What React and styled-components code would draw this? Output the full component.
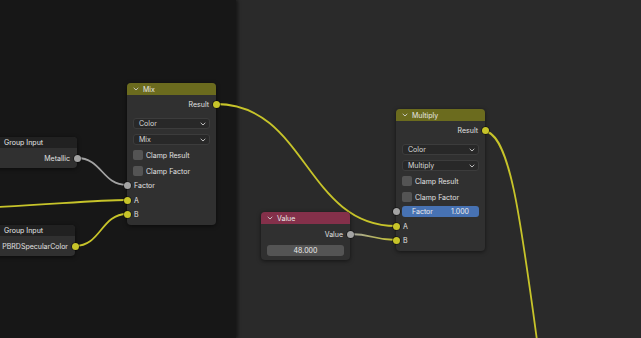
import React from 'react';
import styled, { createGlobalStyle } from 'styled-components';

const GlobalStyle = createGlobalStyle`
  html, body { margin: 0; padding: 0; background: #2a2a2a; }
  * { box-sizing: border-box; }
`;

const YELLOW = '#c7c42a';
const GREY = '#a3a3a3';

const Editor = styled.div`
  position: relative;
  width: 641px;
  height: 338px;
  overflow: hidden;
  display: flex;
  font-family: Inter, "DejaVu Sans", sans-serif;
  font-size: 7px;
  color: #e0e0e0;
`;

const Frame = styled.div`
  width: 236px;
  height: 100%;
  background: #171717;
  box-shadow: 2px 0 3px rgba(0, 0, 0, 0.45);
  z-index: 1;
`;

const Backdrop = styled.div`
  flex: 1;
  height: 100%;
  background-color: #2a2a2a;
`;

const Canvas = styled.div`
  position: absolute;
  inset: 0;
  z-index: 2;
`;

const Wires = styled.svg`
  position: absolute;
  left: 0;
  top: 0;
`;

const Node = styled.div`
  position: absolute;
  left: ${p => p.$x}px;
  top: ${p => p.$y}px;
  width: ${p => p.$w}px;
  height: ${p => p.$h}px;
  background: #303030;
  border-radius: 4px;
  box-shadow: 0 1px 4px rgba(0, 0, 0, 0.55);
  display: flex;
  flex-direction: column;
`;

const Header = styled.div`
  height: ${p => p.$h || 12}px;
  flex: none;
  background: ${p => p.$color};
  border-radius: 4px 4px 0 0;
  display: flex;
  align-items: center;
  gap: 4px;
  padding-left: ${p => p.$pl ?? 6}px;
  color: #e8e8e8;
  font-size: 7px;
`;

const Chevron = () => (
  <svg width="6" height="4" viewBox="0 0 6 4">
    <path d="M0.7 0.8 L3 3 L5.3 0.8" fill="none" stroke="#d0d0d0" strokeWidth="0.9" />
  </svg>
);

const Row = styled.div`
  position: relative;
  height: ${p => p.$h || 14}px;
  margin-top: ${p => p.$mt || 0}px;
  flex: none;
  display: flex;
  align-items: center;
  justify-content: ${p => (p.$out ? 'flex-end' : 'flex-start')};
  padding: 0 ${p => p.$pr ?? 7}px 0 ${p => p.$pl ?? 7}px;
  white-space: nowrap;
`;

const Socket = styled.span`
  position: absolute;
  top: 50%;
  ${p => (p.$out ? 'right: -3.5px;' : 'left: -3.5px;')}
  width: 7px;
  height: 7px;
  margin-top: -3.5px;
  border-radius: 50%;
  background: ${p => p.$color};
  box-shadow: 0 0 0 0.6px rgba(0, 0, 0, 0.7);
`;

const Select = styled.div`
  height: 11px;
  margin: ${p => p.$mt}px 6px 0 6px;
  flex: none;
  background: #282828;
  border: 1px solid #3c3c3c;
  border-radius: 3px;
  display: flex;
  align-items: center;
  justify-content: space-between;
  padding: 0 3px 0 5px;
  color: #dadada;
`;

const Check = styled.div`
  height: 10px;
  margin: ${p => p.$mt}px 6px 0 6px;
  flex: none;
  display: flex;
  align-items: center;
  gap: 3px;
  white-space: nowrap;
`;

const Box = styled.span`
  width: 10px;
  height: 10px;
  border-radius: 2px;
  background: #545454;
`;

const Field = styled.div`
  height: 11px;
  flex: 1;
  border-radius: 3px;
  background: ${p => (p.$active ? '#4772b3' : '#545454')};
  display: flex;
  align-items: center;
  justify-content: ${p => (p.$active ? 'space-between' : 'center')};
  padding: 0 10px 0 10px;
  color: #ececec;
`;

const Dropdown = ({ label, mt }) => (
  <Select $mt={mt}>
    <span>{label}</span>
    <Chevron />
  </Select>
);

const Toggle = ({ label, mt }) => (
  <Check $mt={mt}>
    <Box />
    <span>{label}</span>
  </Check>
);

const MathNode = ({ x, y, title, op, factor }) => (
  <Node $x={x} $y={y} $w={89} $h={142}>
    <Header $color="#6b6b1e">
      <Chevron />
      <span>{title}</span>
    </Header>
    <Row $out $mt={2}>
      Result
      <Socket $out $color={YELLOW} />
    </Row>
    <Dropdown label="Color" mt={7} />
    <Dropdown label={op} mt={5} />
    <Toggle label="Clamp Result" mt={5} />
    <Toggle label="Clamp Factor" mt={6} />
    {factor ? (
      <Row $mt={2} $pl={6} $pr={6}>
        <Field $active>
          <span>Factor</span>
          <span>1.000</span>
        </Field>
        <Socket $color={GREY} />
      </Row>
    ) : (
      <Row $mt={2}>
        Factor
        <Socket $color={GREY} />
      </Row>
    )}
    <Row $mt={1}>
      A
      <Socket $color={YELLOW} />
    </Row>
    <Row>
      B
      <Socket $color={YELLOW} />
    </Row>
  </Node>
);

const GroupInput = ({ x, y, w, label, color }) => (
  <Node $x={x} $y={y} $w={w} $h={31}>
    <Header $color="#212121" $h={11} $pl={24}>
      <span>Group Input</span>
    </Header>
    <Row $out $mt={3}>
      {label}
      <Socket $out $color={color} />
    </Row>
  </Node>
);

const wire = (x1, y1, x2, y2, k = 0.5) => {
  const d = Math.abs(x2 - x1) * k;
  return `M${x1} ${y1} C${x1 + d} ${y1} ${x2 - d} ${y2} ${x2} ${y2}`;
};

export default function App() {
  return (
    <>
      <GlobalStyle />
      <Editor>
        <Frame />
        <Backdrop />
        <Canvas>
          <Wires width="641" height="338">
            <defs>
              <linearGradient id="valwire" x1="350" y1="0" x2="396" y2="0" gradientUnits="userSpaceOnUse">
                <stop offset="0" stopColor={GREY} />
                <stop offset="1" stopColor={YELLOW} />
              </linearGradient>
            </defs>
            <g fill="none" strokeWidth="1.8" strokeLinecap="round">
              <path d={wire(216, 104, 396, 226)} stroke={YELLOW} />
              <path d={wire(350, 234, 396, 240)} stroke="url(#valwire)" />
              <path d={wire(77, 158, 127, 185)} stroke={GREY} />
              <path d="M-40 208.5 C40 206 90 200 127 200" stroke={YELLOW} />
              <path d={wire(75, 246, 127, 214)} stroke={YELLOW} />
              <path d="M484 131 C512 133 522 230 545 400" stroke={YELLOW} />
            </g>
          </Wires>

          <GroupInput x={-20} y={137} w={97} label="Metallic" color={GREY} />
          <GroupInput x={-20} y={225} w={95} label="PBRDSpecularColor" color={YELLOW} />

          <MathNode x={127} y={83} title="Mix" op="Mix" />
          <MathNode x={396} y={109} title="Multiply" op="Multiply" factor />

          <Node $x={261} $y={212} $w={89} $h={48}>
            <Header $color="#84304a">
              <Chevron />
              <span>Value</span>
            </Header>
            <Row $out $mt={3}>
              Value
              <Socket $out $color={GREY} />
            </Row>
            <Row $h={11} $mt={4} $pl={6} $pr={6}>
              <Field>48.000</Field>
            </Row>
          </Node>
        </Canvas>
      </Editor>
    </>
  );
}
